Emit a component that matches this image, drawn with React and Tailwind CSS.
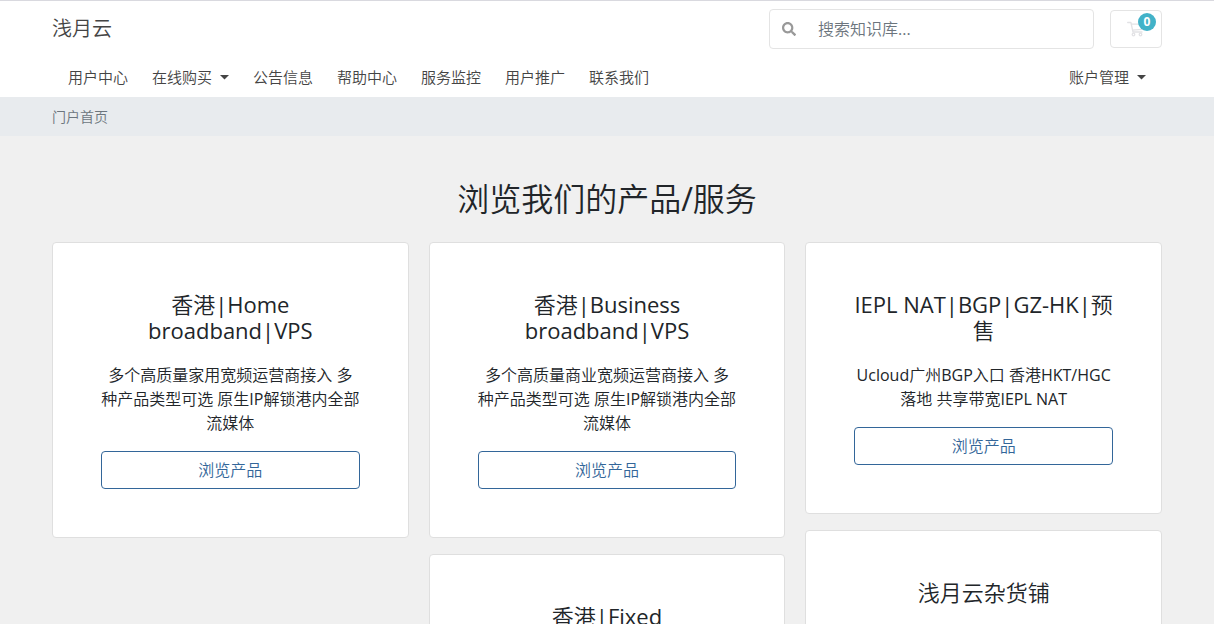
import { FaSearch } from "react-icons/fa";

const navItems = [
  { label: "用户中心" },
  { label: "在线购买", menu: true },
  { label: "公告信息" },
  { label: "帮助中心" },
  { label: "服务监控" },
  { label: "用户推广" },
  { label: "联系我们" },
];

const columns = [
  [
    {
      title: "香港|Home broadband|VPS",
      text: "多个高质量家用宽频运营商接入 多种产品类型可选 原生IP解锁港内全部流媒体",
    },
  ],
  [
    {
      title: "香港|Business broadband|VPS",
      text: "多个高质量商业宽频运营商接入 多种产品类型可选 原生IP解锁港内全部流媒体",
    },
    { title: "香港|Fixed" },
  ],
  [
    {
      title: "IEPL NAT|BGP|GZ-HK|预售",
      text: "Ucloud广州BGP入口 香港HKT/HGC落地 共享带宽IEPL NAT",
    },
    { title: "浅月云杂货铺" },
  ],
];

function Caret() {
  return (
    <svg width="9" height="5" viewBox="0 0 9 5" fill="currentColor" aria-hidden="true">
      <path d="M0 0h9L4.500 4.500z" />
    </svg>
  );
}

function CartIcon() {
  return (
    <svg width="18" height="16" viewBox="0 0 18 16" fill="none" stroke="currentColor" aria-hidden="true">
      <path d="M0.700 1.500h3.200l2.100 9.500h9" strokeWidth="1.300" strokeLinejoin="round" strokeLinecap="round" />
      <path d="M4.400 3.200h12.200l-1.300 5.200l-9.900 0.800" strokeWidth="1.300" strokeLinejoin="round" />
      <circle cx="6.500" cy="13.500" r="1.300" strokeWidth="1.300" />
      <circle cx="13.500" cy="13.500" r="1.300" strokeWidth="1.300" />
    </svg>
  );
}

function ProductCard({ title, text }) {
  return (
    <article className="rounded border border-[#dfdfdf] bg-white p-12 text-center">
      <h3 className="mb-5 text-[22px] leading-[26px]">{title}</h3>
      {text && (
        <>
          <p className="mb-4 text-base leading-6">{text}</p>
          <a
            href="#"
            className="block rounded border border-[#336699] px-3 py-1.5 text-base leading-6 text-[#336699]"
          >
            浏览产品
          </a>
        </>
      )}
    </article>
  );
}

export default function App() {
  return (
    <div className="h-screen overflow-hidden bg-[#f0f0f0] font-['Open_Sans','Noto_Sans_CJK_SC_DemiLight','Noto_Sans_CJK_SC',sans-serif] font-normal text-[#212529]">
      <header className="border-t border-[#d9d9df] bg-white text-[#444444]">
        <div className="mx-auto max-w-[1140px] px-[15px]">
          <div className="flex items-center pt-2">
            <a href="#" className="text-xl">
              浅月云
            </a>
            <form className="ml-auto flex h-10 w-[325px] items-center rounded border border-[#e4e4e4]">
              <button type="button" aria-label="搜索" className="px-3 text-[#999999]">
                <FaSearch size={14} />
              </button>
              <input
                type="text"
                aria-label="搜索知识库"
                placeholder="搜索知识库..."
                className="min-w-0 flex-1 bg-transparent px-2.5 text-base outline-none placeholder:text-[#6c757d]"
              />
            </form>
            <a
              href="#"
              aria-label="购物车"
              className="relative ml-4 flex h-[38px] w-[52px] items-center justify-center rounded border border-[#e4e4e4] text-[#e2e2e5]"
            >
              <CartIcon />
              <span className="absolute top-0.5 right-[5px] flex h-[18px] w-[18px] items-center justify-center rounded-full bg-[#42b2c8] text-xs font-bold text-white">
                0
              </span>
            </a>
          </div>
          <nav className="flex h-12 items-center gap-6 px-4 pt-2 text-[15px]">
            {navItems.map((item) => (
              <a key={item.label} href="#" className="flex items-center gap-2">
                {item.label}
                {item.menu && <Caret />}
              </a>
            ))}
            <a href="#" className="ml-auto flex items-center gap-2">
              账户管理
              <Caret />
            </a>
          </nav>
        </div>
      </header>

      <nav aria-label="breadcrumb" className="bg-[#e8ebee]">
        <div className="mx-auto flex h-[39px] max-w-[1140px] items-center px-[15px] text-sm text-[#6c757d]">
          门户首页
        </div>
      </nav>

      <main className="mx-auto max-w-[1140px] px-[15px] pt-11">
        <h2 className="mb-6 text-center text-[32px] leading-[38px]">浏览我们的产品/服务</h2>
        <div className="grid grid-cols-3 items-start gap-5">
          {columns.map((cards) => (
            <div key={cards[0].title} className="grid gap-4">
              {cards.map((card) => (
                <ProductCard key={card.title} title={card.title} text={card.text} />
              ))}
            </div>
          ))}
        </div>
      </main>
    </div>
  );
}
